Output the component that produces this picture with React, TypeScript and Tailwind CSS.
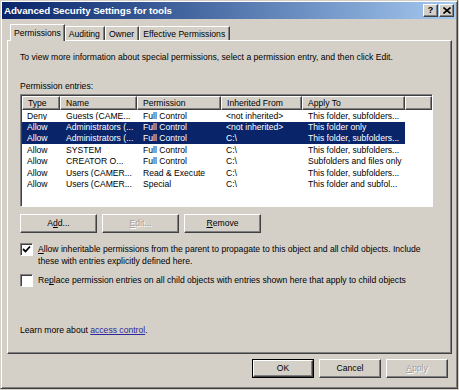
import React from 'react';

const raised =
  'border border-t-white border-l-white border-r-[#404040] border-b-[#404040] shadow-[inset_-1px_-1px_0_#808080]';

type Row = { type: string; name: string; perm: string; from: string; apply: string; sel?: boolean };

const rows: Row[] = [
  { type: 'Deny', name: 'Guests (CAME...', perm: 'Full Control', from: '<not inherited>', apply: 'This folder, subfolders...' },
  { type: 'Allow', name: 'Administrators (...', perm: 'Full Control', from: '<not inherited>', apply: 'This folder only', sel: true },
  { type: 'Allow', name: 'Administrators (...', perm: 'Full Control', from: 'C:\\', apply: 'This folder, subfolders...', sel: true },
  { type: 'Allow', name: 'SYSTEM', perm: 'Full Control', from: 'C:\\', apply: 'This folder, subfolders...' },
  { type: 'Allow', name: 'CREATOR O...', perm: 'Full Control', from: 'C:\\', apply: 'Subfolders and files only' },
  { type: 'Allow', name: 'Users (CAMER...', perm: 'Read & Execute', from: 'C:\\', apply: 'This folder, subfolders...' },
  { type: 'Allow', name: 'Users (CAMER...', perm: 'Special', from: 'C:\\', apply: 'This folder and subfol...' },
];

const cols = ['Type', 'Name', 'Permission', 'Inherited From', 'Apply To', ''];

function Btn({ children, disabled, className = '' }: { children: React.ReactNode; disabled?: boolean; className?: string }) {
  return (
    <div
      className={`flex items-center justify-center bg-[#d4d0c8] ${raised} ${
        disabled ? 'text-[#a0a0a0] [text-shadow:1px_1px_0_#fff]' : 'text-black'
      } ${className}`}
    >
      {children}
    </div>
  );
}

function Check({ checked }: { checked?: boolean }) {
  return (
    <div className="flex h-[13px] w-[13px] shrink-0 items-center justify-center border border-t-[#808080] border-l-[#808080] border-r-white border-b-white bg-white shadow-[inset_1px_1px_0_#404040]">
      {checked && (
        <svg width="9" height="9" viewBox="0 0 9 9">
          <path d="M1 4 L3.5 6.5 L8 1.5" stroke="#000" strokeWidth="1.8" fill="none" />
        </svg>
      )}
    </div>
  );
}

export default function App() {
  return (
    <div className="h-[390px] w-[459px] overflow-hidden bg-[#d4d0c8] font-['Liberation_Sans',Arial,sans-serif] text-[8.6px] leading-none text-black">
      <div className="flex h-[389px] w-[458px] flex-col border border-t-[#d4d0c8] border-l-[#d4d0c8] border-r-[#404040] border-b-[#404040] p-[1px] shadow-[inset_1px_1px_0_#fff,inset_-1px_-1px_0_#808080]">
        {/* title bar */}
        <div className="flex h-[17px] items-center bg-gradient-to-r from-[#0a246a] to-[#a6caf0] pl-[2px] pr-[2px]">
          <span className="text-[9.8px] font-bold tracking-[-0.1px] text-white">Advanced Security Settings for tools</span>
          <div className="ml-auto flex gap-[1px]">
            <Btn className="h-[13px] w-[15px] text-[9px] font-bold">?</Btn>
            <Btn className="h-[13px] w-[15px]">
              <svg width="8" height="7" viewBox="0 0 8 7">
                <path d="M0.5 0.5 L7.5 6.5 M7.5 0.5 L0.5 6.5" stroke="#000" strokeWidth="1.6" />
              </svg>
            </Btn>
          </div>
        </div>

        {/* tabs */}
        <div className="mt-[5px] flex h-[17px] items-end pl-[8px]">
          <div className="relative z-10 flex h-[17px] items-start border border-b-0 border-t-white border-l-white border-r-[#404040] bg-[#d4d0c8] px-[3px] pt-[4px] shadow-[inset_-1px_0_0_#808080]">
            Permissions
          </div>
          {['Auditing', 'Owner', 'Effective Permissions'].map((t) => (
            <div
              key={t}
              className="flex h-[15px] items-start border border-b-0 border-l-0 border-t-white border-r-[#404040] px-[4px] pt-[3px] shadow-[inset_-1px_0_0_#808080,inset_1px_0_0_#fff]"
            >
              {t}
            </div>
          ))}
        </div>

        {/* panel */}
        <div className="-mt-[1px] ml-[5px] flex h-[314px] w-[445px] flex-col border border-t-white border-l-white border-r-[#404040] border-b-[#404040] pl-[12px] pr-[18px] shadow-[inset_-1px_-1px_0_#808080]">
          <div className="mt-[12px] whitespace-nowrap">
            To view more information about special permissions, select a permission entry, and then click Edit.
          </div>
          <div className="mt-[20px]">Permission entries:</div>

          {/* list */}
          <div className="mt-[4px] flex h-[113px] w-[413px] flex-col border border-t-[#808080] border-l-[#808080] border-r-white border-b-white bg-white shadow-[inset_1px_1px_0_#404040]">
            <div className="ml-[1px] mt-[1px] grid h-[14px] grid-cols-[38px_77px_84px_81px_103px_1fr]">
              {cols.map((c, i) => (
                <div key={i} className={`flex items-center bg-[#d4d0c8] pl-[5px] ${raised}`}>
                  {c}
                </div>
              ))}
            </div>
            {rows.map((r, i) => (
              <div key={i} className="ml-[1px] flex h-[11.4px] whitespace-nowrap">
                <div
                  className={`grid w-[383px] grid-cols-[38px_77px_84px_81px_103px] items-center ${
                    r.sel ? 'bg-[#0a246a] text-white' : ''
                  }`}
                >
                  <span className="overflow-hidden pl-[5px]">{r.type}</span>
                  <span className="overflow-hidden pl-[6px]">{r.name}</span>
                  <span className="overflow-hidden pl-[6px]">{r.perm}</span>
                  <span className="overflow-hidden pl-[5px]">{r.from}</span>
                  <span className="overflow-hidden pl-[6px]">{r.apply}</span>
                </div>
              </div>
            ))}
          </div>

          {/* buttons */}
          <div className="mt-[7px] flex gap-[5px]">
            <Btn className="h-[19px] w-[77px]">
              A<u>d</u>d...
            </Btn>
            <Btn disabled className="h-[19px] w-[77px]">
              <u>E</u>dit...
            </Btn>
            <Btn className="h-[19px] w-[77px]">
              <u>R</u>emove
            </Btn>
          </div>

          <div className="mt-[10px] flex items-start gap-[5px]">
            <Check checked />
            <div className="whitespace-nowrap pt-[1px] leading-[11.5px]">
              <u>A</u>llow inheritable permissions from the parent to propagate to this object and all child objects. Include
              <br />
              these with entries explicitly defined here.
            </div>
          </div>

          <div className="mt-[7px] flex items-center gap-[5px]">
            <Check />
            <div className="whitespace-nowrap">
              Re<u>p</u>lace permission entries on all child objects with entries shown here that apply to child objects
            </div>
          </div>

          <div className="mt-auto mb-[18px]">
            Learn more about <span className="text-[#2a2a9a] underline">access control</span>.
          </div>
        </div>

        {/* bottom buttons */}
        <div className="mt-[5px] flex justify-end gap-[5px] pr-[8px]">
          <div className="border border-black">
            <Btn className="h-[17px] w-[60px]">OK</Btn>
          </div>
          <Btn className="h-[19px] w-[62px]">Cancel</Btn>
          <Btn disabled className="h-[19px] w-[62px]">
            <u>A</u>pply
          </Btn>
        </div>
      </div>
    </div>
  );
}
